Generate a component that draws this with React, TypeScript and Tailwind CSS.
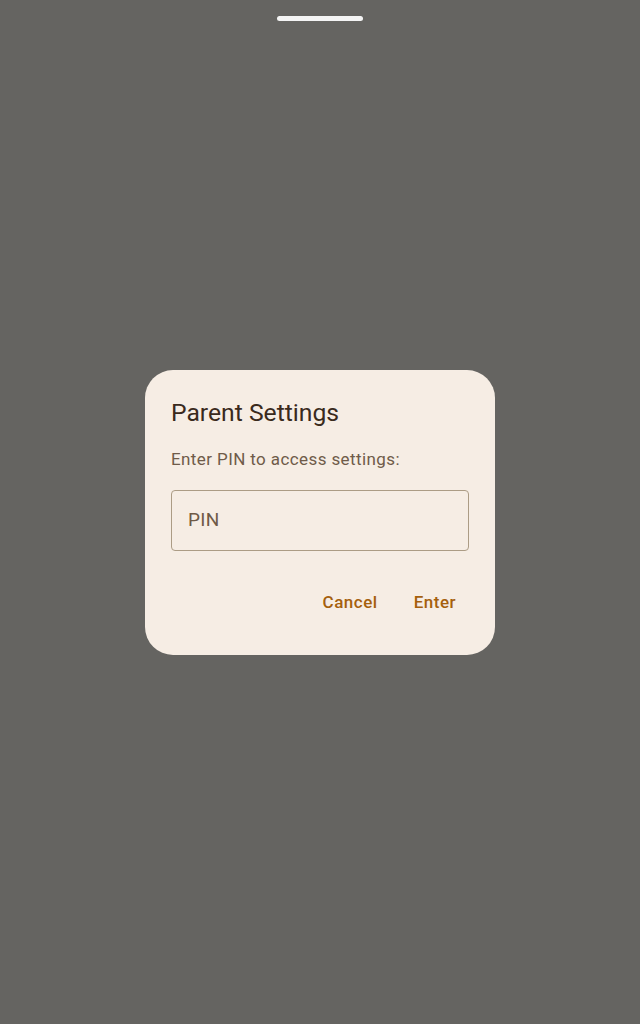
import React from "react";

export default function App() {
  return (
    <div
      className="relative min-h-screen w-full bg-[#656461] flex items-center justify-center"
      style={{ fontFamily: "Roboto, 'Noto Sans', sans-serif" }}
    >
      <div className="absolute top-[16px] left-[277px] w-[86px] h-[5px] rounded-full bg-[#f4f4f4]" />
      <div className="w-[350px] h-[285px] rounded-[28px] bg-[#f6ede4] px-[26px] pt-[27px] flex flex-col">
        <div className="text-[24.7px] leading-[32px] text-[#3a2a1c]">Parent Settings</div>
        <div className="mt-[18px] text-[17px] leading-[24px] tracking-[0.4px] text-[#6f5b49]">
          Enter PIN to access settings:
        </div>
        <div className="mt-[19px] h-[61px] rounded-[4px] border border-[#ac9c85] flex items-center pl-[16px]">
          <span className="text-[19px] text-[#6f5a46] tracking-[0.3px]">PIN</span>
        </div>
        <div className="mt-[32px] flex justify-end gap-[12px] pr-[1px]">
          <button className="h-[40px] px-[12px] text-[17px] font-medium tracking-[0.5px] text-[#a5600d]">
            Cancel
          </button>
          <button className="h-[40px] px-[12px] text-[17px] font-medium tracking-[0.5px] text-[#a5600d]">
            Enter
          </button>
        </div>
      </div>
    </div>
  );
}
